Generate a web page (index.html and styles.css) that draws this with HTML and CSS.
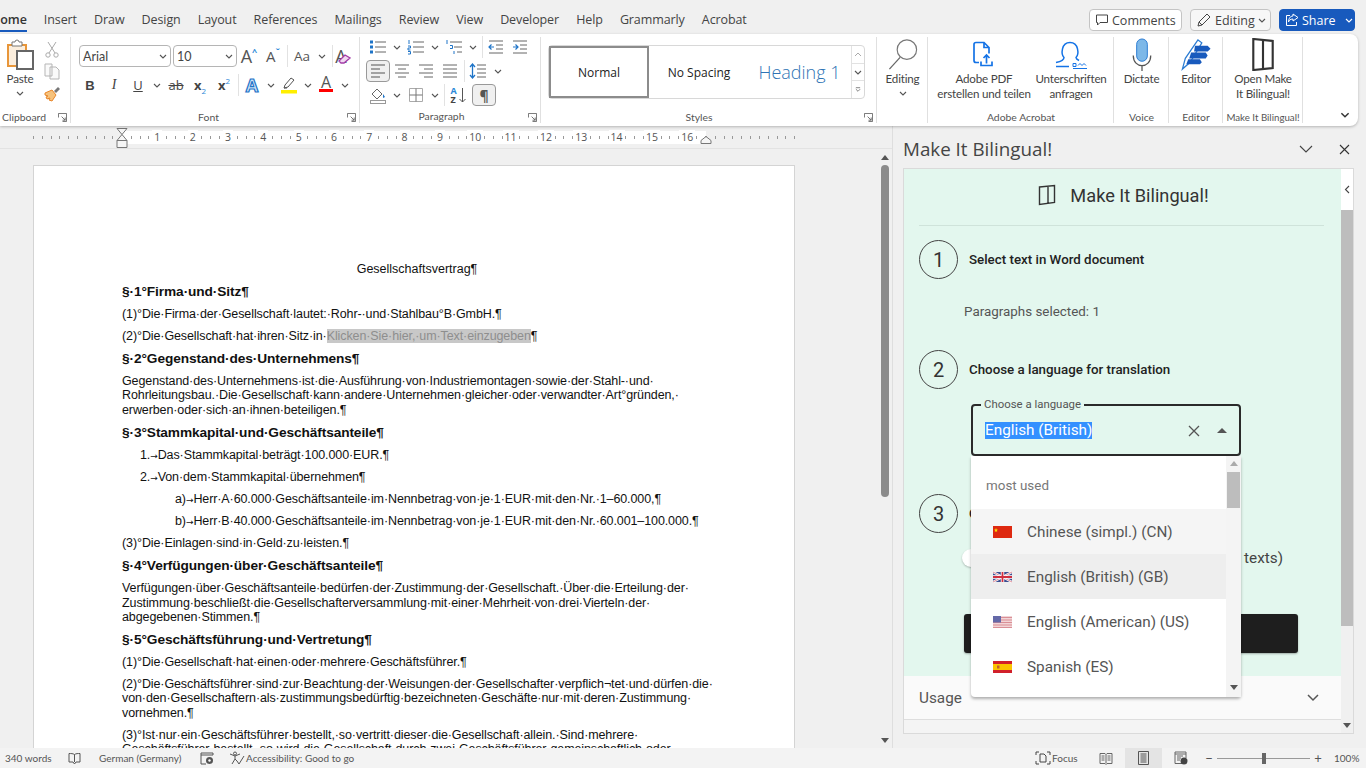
FILE: index.html
```html
<!DOCTYPE html>
<html lang="en">
<head>
    <meta charset="UTF-8">
    <title>Gesellschaftsvertrag - Word</title>
    <link rel="stylesheet" href="styles.css">
</head>
<body>
<svg class="defs" aria-hidden="true">
    <symbol id="chev" viewBox="0 0 8 5"><path d="M1 1l3 3 3-3" fill="none" stroke="#555" stroke-width="1.1"/></symbol>
    <symbol id="launch" viewBox="0 0 10 10"><path d="M.5 5V.5H9.5V9.5H5M4 4l4 4M5 8h3V5" fill="none" stroke="#666"/></symbol>
</svg>

<div class="app">
    <div class="topbar">
        <nav class="tabs">
            <span class="tab tab-on">Home</span>
            <span class="tab">Insert</span>
            <span class="tab">Draw</span>
            <span class="tab">Design</span>
            <span class="tab">Layout</span>
            <span class="tab">References</span>
            <span class="tab">Mailings</span>
            <span class="tab">Review</span>
            <span class="tab">View</span>
            <span class="tab">Developer</span>
            <span class="tab">Help</span>
            <span class="tab">Grammarly</span>
            <span class="tab">Acrobat</span>
        </nav>
        <div class="top-actions">
            <button class="tbtn tbtn-comments"><svg width="14" height="14" viewBox="0 0 14 14"><path d="M1.500 2h11v7.500H5L2.500 12V9.500h-1z" fill="none" stroke="#444"/></svg>Comments</button>
            <button class="tbtn tbtn-editing"><svg width="16" height="16" viewBox="0 0 16 16"><path d="M2 14l1-4 8-8 3 3-8 8zM3 10l3 3" fill="none" stroke="#444"/></svg>Editing<svg class="mini" viewBox="0 0 8 5"><use href="#chev"/></svg></button>
            <button class="tbtn tbtn-share"><svg width="14" height="14" viewBox="0 0 14 14"><path d="M8 1l5 3.500L8 8V6C5 6 4 7.500 3.500 9 3.500 6 5 3 8 3zM5 2.500H1.500v10h10V9" fill="none" stroke="#fff"/></svg>Share<span class="share-sep"><svg class="mini" viewBox="0 0 8 5"><path d="M1 1l3 3 3-3" fill="none" stroke="#fff" stroke-width="1.100"/></svg></span></button>
        </div>
    </div>

    <div class="ribbon">
        <section class="group g-clip">
            <div class="g-body clip-body">
                <div class="big paste">
                    <svg width="30" height="33" viewBox="0 0 30 33"><path d="M3 7h18v21H3z" fill="#fbeedd" stroke="#e8963a" stroke-width="2"/><path d="M7 7V4h3a2 2 0 0 1 4 0h3v4H7z" fill="#fff" stroke="#777"/><path d="M12 13h16v18H12z" fill="#fff" stroke="#666" stroke-width="2"/></svg>
                    <span>Paste</span>
                    <svg class="mini" viewBox="0 0 8 5"><use href="#chev"/></svg>
                </div>
                <div class="clip-tools">
                    <svg width="14" height="17" viewBox="0 0 14 17"><path d="M3 1l7 11M11 1L4 12" stroke="#aaa" fill="none"/><circle cx="3" cy="14" r="2.200" fill="none" stroke="#aaa"/><circle cx="11" cy="14" r="2.200" fill="none" stroke="#aaa"/></svg>
                    <svg width="16" height="17" viewBox="0 0 16 17"><path d="M1 1h7v12H1zM6 4h6l3 3v9H6z" fill="#fafafa" stroke="#b5b5b5"/></svg>
                    <svg width="17" height="17" viewBox="0 0 17 17"><path d="M1 8l7-3 4 5-4 6-3-1 1-2-3 1-1-2 2-1-3-1z" fill="#f6c27c" stroke="#e8862a"/><path d="M10 6l4-4 2 2-4 4z" fill="#777"/></svg>
                </div>
            </div>
            <div class="g-label">Clipboard<svg class="launch" viewBox="0 0 10 10"><use href="#launch"/></svg></div>
        </section>

        <section class="group g-font">
            <div class="g-body rows-font">
                <div class="row">
                    <div class="combo combo-font">Arial<svg class="mini" viewBox="0 0 8 5"><use href="#chev"/></svg></div>
                    <div class="combo combo-size">10<svg class="mini" viewBox="0 0 8 5"><use href="#chev"/></svg></div>
                    <span class="b glyph glyph-big">A<i class="sup-blue">^</i></span>
                    <span class="b glyph glyph-mid">A<i class="sup-blue">ˇ</i></span>
                    <i class="sep"></i>
                    <span class="b b-aa glyph">Aa</span><span class="ch"><svg class="mini" viewBox="0 0 8 5"><use href="#chev"/></svg></span>
                    <i class="sep sep-far"></i>
                    <span class="b glyph glyph-big clear-fmt">A<svg width="13" height="10" viewBox="0 0 13 10"><path d="M1 7l6-6 5 3-6 5H3z" fill="#f0d8f0" stroke="#a33ca8" stroke-width="1.300"/></svg></span>
                </div>
                <div class="row row-fmt">
                    <span class="b fmt fmt-b">B</span>
                    <span class="b fmt fmt-i">I</span>
                    <span class="b fmt fmt-u">U</span><span class="ch ch-n"><svg class="mini" viewBox="0 0 8 5"><use href="#chev"/></svg></span>
                    <span class="b fmt fmt-s">ab</span>
                    <span class="b fmt fmt-x">x<i class="blue-sub">2</i></span>
                    <span class="b fmt fmt-x">x<i class="blue-sup">2</i></span>
                    <i class="sep"></i>
                    <span class="b fx-a">A</span><span class="ch"><svg class="mini" viewBox="0 0 8 5"><use href="#chev"/></svg></span>
                    <span class="b"><svg width="18" height="18" viewBox="0 0 18 18"><path d="M4 12l1-3 6-7 3 2-6 7z" fill="#fff" stroke="#555"/><path d="M4 12l3 0" stroke="#555"/><rect x="1" y="14" width="16" height="3.500" fill="#ffef00"/></svg></span><span class="ch"><svg class="mini" viewBox="0 0 8 5"><use href="#chev"/></svg></span>
                    <span class="b fcolor">A</span><span class="ch"><svg class="mini" viewBox="0 0 8 5"><use href="#chev"/></svg></span>
                </div>
            </div>
            <div class="g-label">Font<svg class="launch" viewBox="0 0 10 10"><use href="#launch"/></svg></div>
        </section>

        <section class="group g-para">
            <div class="g-body rows-para">
                <div class="row">
                    <span class="b"><svg width="18" height="16" viewBox="0 0 18 16"><path d="M6 3h11M6 8h11M6 13h11" stroke="#666"/><path d="M1 1.500h3v3H1zM1 6.500h3v3H1zM1 11.500h3v3H1z" fill="#1e74c8"/></svg></span><span class="ch ch-w"><svg class="mini" viewBox="0 0 8 5"><use href="#chev"/></svg></span>
                    <span class="b"><svg width="18" height="16" viewBox="0 0 18 16"><path d="M6 3h11M6 8h11M6 13h11" stroke="#666"/><path d="M2 1v4M1 7h2.500v2H1v2h2.500M1 12.500h2.500V15H1" fill="none" stroke="#1e74c8"/></svg></span><span class="ch ch-w"><svg class="mini" viewBox="0 0 8 5"><use href="#chev"/></svg></span>
                    <span class="b"><svg width="18" height="16" viewBox="0 0 18 16"><path d="M5 3h12M9 8h8M12 13h5" stroke="#666"/><path d="M2 1v4M5 6.500h2.500v3H5M9 12v3" fill="none" stroke="#1e74c8"/></svg></span><span class="ch ch-w"><svg class="mini" viewBox="0 0 8 5"><use href="#chev"/></svg></span>
                    <i class="sep"></i>
                    <span class="b"><svg width="16" height="14" viewBox="0 0 16 14"><path d="M1 1h14M8 5h7M8 9h7M1 13h14" stroke="#666"/><path d="M6 7H1M3.500 4.500L1 7l2.500 2.500" fill="none" stroke="#1e74c8" stroke-width="1.200"/></svg></span>
                    <span class="b"><svg width="16" height="14" viewBox="0 0 16 14"><path d="M1 1h14M8 5h7M8 9h7M1 13h14" stroke="#666"/><path d="M1 7h5M3.500 4.500L6 7 3.500 9.500" fill="none" stroke="#1e74c8" stroke-width="1.200"/></svg></span>
                </div>
                <div class="row">
                    <span class="b b-on"><svg width="16" height="14" viewBox="0 0 16 14"><path d="M1 1h14M1 5h9M1 9h14M1 13h9" stroke="#555"/></svg></span>
                    <span class="b"><svg width="16" height="14" viewBox="0 0 16 14"><path d="M1 1h14M4 5h8M1 9h14M4 13h8" stroke="#666"/></svg></span>
                    <span class="b"><svg width="16" height="14" viewBox="0 0 16 14"><path d="M1 1h14M6 5h9M1 9h14M6 13h9" stroke="#666"/></svg></span>
                    <span class="b"><svg width="16" height="14" viewBox="0 0 16 14"><path d="M1 1h14M1 5h14M1 9h14M1 13h14" stroke="#666"/></svg></span>
                    <i class="sep"></i>
                    <span class="b"><svg width="18" height="16" viewBox="0 0 18 16"><path d="M8 2h9M8 6h9M8 10h9M8 14h9" stroke="#666"/><path d="M3.500 1v14M1 4l2.500-3L6 4M1 12l2.500 3L6 12" fill="none" stroke="#1e74c8" stroke-width="1.300"/></svg></span><span class="ch ch-s"><svg class="mini" viewBox="0 0 8 5"><use href="#chev"/></svg></span>
                </div>
                <div class="row">
                    <span class="b"><svg width="18" height="18" viewBox="0 0 18 18"><path d="M3 8l5-5 5 5-5 5z" fill="#fff" stroke="#666"/><path d="M14 8l2 3-2 1z" fill="#1e74c8"/><rect x="1.500" y="14.500" width="15" height="3" fill="#fff" stroke="#999"/></svg></span><span class="ch ch-w"><svg class="mini" viewBox="0 0 8 5"><use href="#chev"/></svg></span>
                    <span class="b"><svg width="16" height="16" viewBox="0 0 16 16"><path d="M1.500 1.500h13v13h-13z" fill="none" stroke="#aaa"/><path d="M8 1.500v13M1.500 8h13" stroke="#777"/></svg></span><span class="ch ch-w"><svg class="mini" viewBox="0 0 8 5"><use href="#chev"/></svg></span>
                    <i class="sep"></i>
                    <span class="b sort"><span class="sort-az"><i>A</i><i>Z</i></span><svg width="7" height="16" viewBox="0 0 7 16"><path d="M3.500 1v14M.5 12l3 3 3-3" fill="none" stroke="#555"/></svg></span>
                    <span class="b b-on pilcrow">¶</span>
                </div>
            </div>
            <div class="g-label">Paragraph<svg class="launch" viewBox="0 0 10 10"><use href="#launch"/></svg></div>
        </section>

        <section class="group g-styles">
            <div class="g-body">
                <div class="gallery">
                    <div class="st st-normal">Normal</div>
                    <div class="st">No Spacing</div>
                    <div class="st st-h1">Heading 1</div>
                    <div class="st-scroll">
                        <span><svg class="mini" viewBox="0 0 8 5"><path d="M1 4l3-3 3 3" fill="none" stroke="#aaa"/></svg></span>
                        <span><svg class="mini" viewBox="0 0 8 5"><use href="#chev"/></svg></span>
                        <span><svg class="mini" viewBox="0 0 8 7"><path d="M1 1h6M1 3l3 3 3-3" fill="none" stroke="#555"/></svg></span>
                    </div>
                </div>
            </div>
            <div class="g-label">Styles<svg class="launch" viewBox="0 0 10 10"><use href="#launch"/></svg></div>
        </section>

        <section class="group g-edit">
            <div class="g-body">
                <div class="big">
                    <svg width="34" height="33" viewBox="0 0 34 34"><circle cx="21" cy="12" r="10" fill="none" stroke="#777" stroke-width="1.200"/><path d="M14 20L3 32" stroke="#666" stroke-width="1.300"/></svg>
                    <span>Editing</span>
                    <svg class="mini" viewBox="0 0 8 5"><use href="#chev"/></svg>
                </div>
            </div>
            <div class="g-label"></div>
        </section>

        <section class="group g-acro">
            <div class="g-body acro-body">
                <div class="big big-acro">
                    <svg width="32" height="33" viewBox="0 0 32 32"><path d="M11 24H8a2 2 0 0 1-2-2V6a2 2 0 0 1 2-2h8l5 5v6M16 4v5h5" fill="none" stroke="#1473e6" stroke-width="1.700"/><path d="M13 23v4h11v-4M18.500 25v-8M15.500 19.500l3-3 3 3" fill="none" stroke="#1473e6" stroke-width="1.700"/></svg>
                    <span>Adobe PDF<br>erstellen und teilen</span>
                </div>
                <div class="big big-sign">
                    <svg width="36" height="33" viewBox="0 0 36 32"><path d="M3 24c5-1 8-3 8-5-3-3-3-15 6-15s9 12 6 15c0 1 1 2 3 3M3 28h13" fill="none" stroke="#1473e6" stroke-width="1.500"/><path d="M20 25h3v3h-3zM25 27l2-2 2 2 2-2 2 2M20 30h14" fill="none" stroke="#1473e6"/></svg>
                    <span>Unterschriften<br>anfragen</span>
                </div>
            </div>
            <div class="g-label">Adobe Acrobat</div>
        </section>

        <section class="group g-voice">
            <div class="g-body">
                <div class="big">
                    <svg width="30" height="33" viewBox="0 0 30 34"><rect x="9.500" y="1" width="11" height="23" rx="5.500" fill="#7db8e8" stroke="#2b7cd3"/><path d="M6 18c0 14 18 14 18 0M15 28v6" fill="none" stroke="#555" stroke-width="1.300"/></svg>
                    <span>Dictate</span>
                </div>
            </div>
            <div class="g-label">Voice</div>
        </section>

        <section class="group g-editor">
            <div class="g-body">
                <div class="big">
                    <svg width="32" height="33" viewBox="0 0 32 34"><path d="M2 32l3-11L18 2l4 3-12 20z" fill="#fff" stroke="#2b7cd3" stroke-width="1.300"/><path d="M15 8h13l3 3-3 3H14zM11 15h15l2 3-2 3H9zM8 22h12l2 3-2 2H6z" fill="#185abd"/></svg>
                    <span>Editor</span>
                </div>
            </div>
            <div class="g-label">Editor</div>
        </section>

        <section class="group g-make">
            <div class="g-body">
                <div class="big">
                    <svg width="24" height="33" viewBox="0 0 24 34"><path d="M2 1l20 2v28L2 33zM12 2v29" fill="none" stroke="#333" stroke-width="2.200"/></svg>
                    <span>Open Make<br>It Bilingual!</span>
                </div>
            </div>
            <div class="g-label g-label-tight">Make It Bilingual!</div>
        </section>

        <div class="ribbon-end"><svg width="10" height="6" viewBox="0 0 8 5"><path d="M1 1l3 3 3-3" fill="none" stroke="#333" stroke-width="1.200"/></svg></div>
    </div>

    <div class="main">
        <div class="doc-col">
            <div class="ruler">
                <div class="ruler-side"></div>
                <div class="ruler-white">
                    <span class="r-half"></span>
                    <span class="r-n"><b>1</b></span><span class="r-n"><b>2</b></span><span class="r-n"><b>3</b></span><span class="r-n"><b>4</b></span>
                    <span class="r-n"><b>5</b></span><span class="r-n"><b>6</b></span><span class="r-n"><b>7</b></span><span class="r-n"><b>8</b></span>
                    <span class="r-n"><b>9</b></span><span class="r-n"><b>10</b></span><span class="r-n"><b>11</b></span><span class="r-n"><b>12</b></span>
                    <span class="r-n"><b>13</b></span><span class="r-n"><b>14</b></span><span class="r-n"><b>15</b></span><span class="r-n"><b>16</b></span>
                    <svg class="marker marker-l" width="12" height="20" viewBox="0 0 12 20"><path d="M1 .500h10L6 6.500zM6 6.500l5 6v7H1v-7zM1 12.500h10" fill="#f6f6f6" stroke="#777"/></svg>
                    <svg class="marker marker-r" width="12" height="8" viewBox="0 0 12 8"><path d="M6 .500l5 4v3H1v-3z" fill="#f6f6f6" stroke="#777"/></svg>
                </div>
                <div class="ruler-side"></div>
            </div>
            <div class="doc-row">
                <div class="doc-scroll">
                    <div class="page">
                        <p class="title">Gesellschaftsvertrag¶</p>
                        <h2>§·1°Firma·und·Sitz¶</h2>
                        <p>(1)°Die·Firma·der·Gesellschaft·lautet:·Rohr-·und·Stahlbau°B·GmbH.¶</p>
                        <p>(2)°Die·Gesellschaft·hat·ihren·Sitz·in·<span class="field">Klicken·Sie·hier,·um·Text·einzugeben</span>¶</p>
                        <h2>§·2°Gegenstand·des·Unternehmens¶</h2>
                        <p>Gegenstand·des·Unternehmens·ist·die·Ausführung·von·Industriemontagen·sowie·der·Stahl-·und·<br>Rohrleitungsbau.·Die·Gesellschaft·kann·andere·Unternehmen·gleicher·oder·verwandter·Art°gründen,·<br>erwerben·oder·sich·an·ihnen·beteiligen.¶</p>
                        <h2>§·3°Stammkapital·und·Geschäftsanteile¶</h2>
                        <p class="li1">1.<span class="tabmark">→</span>Das·Stammkapital·beträgt·100.000·EUR.¶</p>
                        <p class="li1">2.<span class="tabmark">→</span>Von·dem·Stammkapital·übernehmen¶</p>
                        <p class="li2">a)<span class="tabmark">→</span>Herr·A·60.000·Geschäftsanteile·im·Nennbetrag·von·je·1·EUR·mit·den·Nr.·1–60.000,¶</p>
                        <p class="li2">b)<span class="tabmark">→</span>Herr·B·40.000·Geschäftsanteile·im·Nennbetrag·von·je·1·EUR·mit·den·Nr.·60.001–100.000.¶</p>
                        <p>(3)°Die·Einlagen·sind·in·Geld·zu·leisten.¶</p>
                        <h2>§·4°Verfügungen·über·Geschäftsanteile¶</h2>
                        <p>Verfügungen·über·Geschäftsanteile·bedürfen·der·Zustimmung·der·Gesellschaft.·Über·die·Erteilung·der·<br>Zustimmung·beschließt·die·Gesellschafterversammlung·mit·einer·Mehrheit·von·drei·Vierteln·der·<br>abgegebenen·Stimmen.¶</p>
                        <h2>§·5°Geschäftsführung·und·Vertretung¶</h2>
                        <p>(1)°Die·Gesellschaft·hat·einen·oder·mehrere·Geschäftsführer.¶</p>
                        <p>(2)°Die·Geschäftsführer·sind·zur·Beachtung·der·Weisungen·der·Gesellschafter·verpflich¬tet·und·dürfen·die·<br>von·den·Gesellschaftern·als·zustimmungsbedürftig·bezeichneten·Geschäfte·nur·mit·deren·Zustimmung·<br>vornehmen.¶</p>
                        <p>(3)°Ist·nur·ein·Geschäftsführer·bestellt,·so·vertritt·dieser·die·Gesellschaft·allein.·Sind·mehrere·<br>Geschäftsführer·bestellt,·so·wird·die·Gesellschaft·durch·zwei·Geschäftsführer·gemeinschaftlich·oder·</p>
                    </div>
                </div>
                <div class="vbar">
                    <i class="arrow-up"></i>
                    <div class="vthumb"></div>
                    <i class="arrow-down vbar-down"></i>
                </div>
            </div>
        </div>

        <aside class="pane">
            <div class="pane-head">
                <span class="pane-title">Make It Bilingual!</span>
                <svg class="pane-chev" width="14" height="8" viewBox="0 0 14 8"><path d="M1 1l6 6 6-6" fill="none" stroke="#444" stroke-width="1.100"/></svg>
                <svg width="11" height="11" viewBox="0 0 11 11"><path d="M1 1l9 9M10 1l-9 9" stroke="#333" stroke-width="1.100"/></svg>
            </div>
            <div class="addin">
                <div class="addin-body">
                    <div class="mint">
                        <div class="brand">
                            <svg width="18" height="22" viewBox="0 0 18 22"><path d="M1.500 3l15-1.500v17l-15 2zM10 2.500v17" fill="none" stroke="#333" stroke-width="1.400"/></svg>
                            <span>Make It Bilingual!</span>
                        </div>
                        <div class="step">
                            <span class="num">1</span>
                            <strong>Select text in Word document</strong>
                        </div>
                        <p class="selected-count">Paragraphs selected: 1</p>
                        <div class="step step-2">
                            <span class="num">2</span>
                            <strong>Choose a language for translation</strong>
                        </div>
                        <div class="field-wrap">
                            <label class="field-label">Choose a language</label>
                            <div class="select-box">
                                <span class="select-val">English (British)</span>
                                <svg class="select-x" width="12" height="12" viewBox="0 0 12 12"><path d="M1 1l10 10M11 1L1 11" stroke="#555" stroke-width="1.300"/></svg>
                                <i class="select-tri"></i>
                            </div>
                            <div class="dropdown">
                                <div class="dd-list">
                                    <div class="dd-head">most used</div>
                                    <div class="dd-item dd-hover">
                                        <svg class="flag" viewBox="0 0 19 12"><rect width="19" height="12" fill="#de2910"/><path d="M3 2l.6 1.500L5 3.700l-1.100.9.300 1.500L3 5.300l-1.200.8.300-1.500L1 3.700l1.400-.2z" fill="#ffde00"/></svg>
                                        <span>Chinese (simpl.) (CN)</span>
                                    </div>
                                    <div class="dd-item dd-active">
                                        <svg class="flag" viewBox="0 0 19 12"><rect width="19" height="10" y="1" fill="#3b4f91"/><path d="M0 1l19 10M19 1L0 11" stroke="#fff" stroke-width="2"/><path d="M0 1l19 10M19 1L0 11" stroke="#cf5b6b" stroke-width=".7"/><path d="M9.500 1v10M0 6h19" stroke="#fff" stroke-width="3.400"/><path d="M9.500 1v10M0 6h19" stroke="#cf3040" stroke-width="1.800"/></svg>
                                        <span>English (British) (GB)</span>
                                    </div>
                                    <div class="dd-item">
                                        <svg class="flag" viewBox="0 0 19 12"><rect width="19" height="12" fill="#f2d5d7"/><path d="M0 1.500h19M0 4h19M0 6.500h19M0 9h19M0 11.500h19" stroke="#d98f96" stroke-width="1.100"/><rect width="8" height="6.500" fill="#6469a8"/></svg>
                                        <span>English (American) (US)</span>
                                    </div>
                                    <div class="dd-item">
                                        <svg class="flag" viewBox="0 0 19 12"><rect width="19" height="12" fill="#d1202a"/><rect y="3" width="19" height="6" fill="#fbc400"/><rect x="4" y="4.500" width="2.500" height="3" fill="#c06030"/></svg>
                                        <span>Spanish (ES)</span>
                                    </div>
                                </div>
                                <div class="dd-bar">
                                    <i class="arrow-up dd-up"></i>
                                    <div class="dd-thumb"></div>
                                    <i class="arrow-down dd-down"></i>
                                </div>
                            </div>
                        </div>
                        <div class="step step-3">
                            <span class="num">3</span>
                            <strong>Create bilingual document</strong>
                        </div>
                        <div class="toggle-row">
                            <i class="toggle"></i>
                            <span>Use machine translation (for longer texts)</span>
                        </div>
                        <button class="run-btn" aria-label="Translate"></button>
                    </div>
                    <div class="usage">
                        <span>Usage</span>
                        <svg width="12" height="8" viewBox="0 0 12 8"><path d="M1 1l5 5 5-5" fill="none" stroke="#555" stroke-width="1.500"/></svg>
                    </div>
                </div>
                <div class="addin-bar">
                    <div class="collapse-tab"><svg width="6" height="9" viewBox="0 0 6 9"><path d="M5 1L1.500 4.500 5 8" fill="none" stroke="#444" stroke-width="1.100"/></svg></div>
                    <div class="addin-thumb"></div>
                    <i class="arrow-down addin-down"></i>
                </div>
            </div>
        </aside>
    </div>

    <footer class="status">
        <span class="st-words">340 words</span>
        <svg class="st-book" width="13" height="13" viewBox="0 0 13 13"><path d="M1 1.500c2 0 4 0 5.500 1 1.500-1 3.500-1 5.500-1V10H8l-1.500 2L5 10H1zM6.500 2.500V10" fill="none" stroke="#555"/></svg>
        <span class="st-lang">German (Germany)</span>
        <svg class="st-macro" width="14" height="13" viewBox="0 0 14 13"><path d="M1 1h12v2H1zM1 3v9h5" fill="none" stroke="#555"/><circle cx="9.500" cy="8.500" r="3.500" fill="#555"/><circle cx="9.500" cy="8.500" r="1.200" fill="#fff"/></svg>
        <svg class="st-acc" width="16" height="14" viewBox="0 0 16 14"><circle cx="6" cy="2.500" r="1.500" fill="none" stroke="#555"/><path d="M1 3l5 2 5-2M6 5v3l-3 5M6 8l2 2 2 3 5-8" fill="none" stroke="#555"/></svg>
        <span class="st-a11y">Accessibility: Good to go</span>
        <div class="st-right">
            <svg width="16" height="14" viewBox="0 0 16 14"><path d="M1 4V1h3M12 1h3v3M15 10v3h-3M4 13H1v-3" fill="none" stroke="#444"/><path d="M5 3h4l2 2v6H5z" fill="none" stroke="#444"/></svg>
            <span class="st-focus">Focus</span>
            <svg class="st-read" width="14" height="13" viewBox="0 0 14 13"><path d="M1 1.500h5l1 1 1-1h5v10H8l-1 1-1-1H1zM7 2.500v9M2.500 4h3M2.500 6h3M2.500 8h3M8.500 4h3M8.500 6h3M8.500 8h3" fill="none" stroke="#666"/></svg>
            <span class="st-print"><svg width="11" height="14" viewBox="0 0 11 14"><path d="M.5.500h10v13H.5zM2.500 3h6M2.500 5h6M2.500 7h6M2.500 9h6M2.500 11h6" fill="none" stroke="#555"/></svg></span>
            <svg class="st-web" width="14" height="14" viewBox="0 0 14 14"><path d="M9 12.500H1V1h11v6M1 3h11M3 5h6M3 7h4M3 9h3" fill="none" stroke="#666"/><circle cx="10" cy="10" r="3.500" fill="#444"/></svg>
            <span class="st-zoomctl">−</span>
            <div class="slider"><i></i></div>
            <span class="st-zoomctl st-plus">+</span>
            <span class="st-pct">100%</span>
        </div>
    </footer>
</div>
</body>
</html>
```

FILE: styles.css
```css
*{
    margin: 0;
    padding: 0;
    box-sizing: border-box;
}
html,body{
    width: 1366px;
    height: 768px;
    overflow: hidden;
}
body{
    background: #f0f0f0;
    font-family: "Open Sans", "Liberation Sans", sans-serif;
    color: #444;
}
i{
    font-style: normal;
}
.defs{
    display: none;
}
.app{
    display: flex;
    flex-direction: column;
    height: 768px;
}
.mini{
    width: 8px;
    height: 5px;
    display: block;
    flex: none;
}

/* top tabs */
.topbar{
    height: 34px;
    display: flex;
    justify-content: space-between;
    padding-right: 11px;
    flex: none;
}
.tabs{
    display: flex;
    gap: 17.100px;
    margin-left: -9px;
    font-size: 12.500px;
    letter-spacing: -.1px;
}
.tab{
    height: 32px;
    line-height: 40px;
    color: #444;
    white-space: nowrap;
}
.tab-on{
    border-bottom: 2px solid #185abd;
    color: #333;
    font-weight: 600;
}
.top-actions{
    display: flex;
    gap: 8px;
    padding-top: 9px;
}
.tbtn{
    height: 22px;
    border: 1px solid #c4c4c4;
    border-radius: 4px;
    background: #fff;
    display: flex;
    align-items: center;
    gap: 3px;
    font: 12.500px "Open Sans", sans-serif;
    color: #444;
    padding: 0 5px;
    white-space: nowrap;
}
.tbtn svg{
    flex: none;
}
.tbtn-comments{
    width: 93px;
}
.tbtn-editing{
    width: 81px;
    background: #f7f7f7;
}
.tbtn-share{
    width: 76px;
    background: #185abd;
    border-color: #185abd;
    color: #fff;
}
.share-sep{
    margin-left: 6px;
}

/* ribbon */
.ribbon{
    height: 92px;
    width: 1358px;
    background: #fff;
    border-radius: 0 8px 8px 0;
    box-shadow: 0 1px 3px rgba(0,0,0,.25);
    display: flex;
    flex: none;
    position: relative;
    z-index: 2;
    font-family: Lato, "Open Sans", sans-serif;
    font-size: 12px;
    color: #444;
}
.group{
    display: flex;
    flex-direction: column;
    position: relative;
    padding: 2px 0 0;
}
.group::after{
    content: "";
    position: absolute;
    right: 0;
    top: 3px;
    bottom: 3px;
    width: 1px;
    background: #e0e0e0;
}
.g-body{
    height: 72px;
    flex: none;
}
.g-label{
    flex: 1;
    font-size: 10.400px;
    line-height: 18px;
    text-align: center;
    color: #555;
    white-space: nowrap;
}
.g-label-tight{
    font-size: 9.700px;
}
.launch{
    position: absolute;
    right: 4px;
    bottom: 4px;
    width: 9px;
    height: 9px;
}
.g-clip{
    width: 71px;
}
.g-font{
    width: 289px;
}
.g-font .g-label{
    padding-right: 14px;
}
.g-para{
    width: 181px;
}
.g-para .g-label{
    padding-right: 18px;
}
.g-styles{
    width: 336px;
}
.g-styles .g-label{
    padding-right: 20px;
}
.g-edit{
    width: 51px;
}
.g-acro{
    width: 186px;
}
.g-voice{
    width: 55px;
}
.g-editor{
    width: 54px;
}
.g-make{
    width: 80px;
}
.g-clip .g-label{
    text-align: left;
    padding-left: 2px;
}
.ribbon-end{
    flex: 1;
    display: flex;
    align-items: flex-end;
    justify-content: flex-end;
    padding: 0 8px 8px 0;
}
.big{
    display: flex;
    flex-direction: column;
    align-items: center;
    padding-top: 2px;
    line-height: 15px;
    text-align: center;
    white-space: nowrap;
    font-size: 11.600px;
    letter-spacing: -.2px;
}
.big .mini{
    margin-top: 5px;
}
.clip-body{
    display: flex;
    padding-left: 5px;
}
.paste{
    width: 30px;
}
.clip-tools{
    display: flex;
    flex-direction: column;
    align-items: center;
    justify-content: space-between;
    width: 16px;
    height: 66px;
    margin-left: 9px;
    padding-top: 5px;
}

/* font group */
.row{
    display: flex;
    align-items: center;
    height: 24px;
}
.rows-font{
    padding: 8px 0 0 8px;
}
.row-fmt{
    margin: 5px 0 0 -1px;
}
.b{
    width: 24px;
    height: 22px;
    display: flex;
    align-items: center;
    justify-content: center;
    flex: none;
    border-radius: 4px;
    border: 1px solid transparent;
    position: relative;
    font-family: "Open Sans", sans-serif;
}
.b-on{
    background: #f0f0f0;
    border-color: #999;
}
.ch{
    width: 13px;
    height: 22px;
    display: flex;
    align-items: center;
    justify-content: center;
    flex: none;
}
.ch-n{
    width: 14px;
}
.ch-w{
    width: 14px;
}
.ch-s{
    width: 10px;
    margin-left: 3px;
}
.sep{
    display: block;
    width: 1px;
    height: 22px;
    background: #e2e2e2;
    margin: 0 1.500px;
    flex: none;
}
.sep-far{
    margin: 0 -4px 0 4px;
}
.combo{
    height: 22px;
    border: 1px solid #b5b5b5;
    border-radius: 4px;
    display: flex;
    align-items: center;
    justify-content: space-between;
    padding: 0 3px;
    font-size: 12.500px;
    margin-right: 2px;
    flex: none;
}
.combo-font{
    width: 92px;
}
.combo-size{
    width: 64px;
    margin-right: 0;
}
.glyph{
    font-size: 16px;
    color: #555;
}
.glyph-big{
    font-size: 18px;
}
.glyph-mid{
    font-size: 15px;
}
.sup-blue{
    font-size: 9px;
    color: #2b88d8;
    font-weight: 700;
    margin-top: -10px;
}
.b-aa{
    font-size: 13.500px;
    width: 26px;
}
.clear-fmt svg{
    position: absolute;
    right: 1px;
    bottom: 2px;
}
.fmt{
    font-size: 13px;
    color: #444;
}
.fmt-b{
    font-weight: 700;
    font-family: "Liberation Sans", sans-serif;
}
.fmt-i{
    font-style: italic;
    font-family: "Liberation Serif", serif;
    font-size: 14px;
}
.fmt-u{
    text-decoration: underline;
}
.fmt-s{
    text-decoration: line-through;
}
.fmt-x{
    font-weight: 700;
}
.blue-sub,.blue-sup{
    font-size: 8px;
    color: #2b88d8;
    font-weight: 400;
    position: relative;
}
.blue-sub{
    top: 5px;
}
.blue-sup{
    top: -5px;
}
.fx-a{
    font-size: 18px;
    font-weight: 700;
    color: #cfe4f7;
    -webkit-text-stroke: 1.200px #1e74c8;
}
.fcolor{
    font-size: 16px;
    color: #555;
    line-height: 15px;
    padding-bottom: 3px;
    border-bottom: 4px solid transparent;
}
.fcolor::after{
    content: "";
    position: absolute;
    left: 4px;
    right: 4px;
    bottom: 0;
    height: 3.500px;
    background: #f00;
}

/* paragraph group */
.rows-para{
    padding: 0 0 0 6px;
    margin-top: -1px;
}
.rows-para .row{
    height: 24px;
}
.sort{
    gap: 2px;
}
.sort-az{
    display: flex;
    flex-direction: column;
    font-size: 9px;
    line-height: 9px;
    font-weight: 700;
    color: #2b88d8;
}
.sort-az i:last-child{
    color: #444;
}
.pilcrow{
    margin-left: 2px;
    font-size: 14px;
    font-weight: 700;
    color: #555;
}

/* styles group */
.g-styles .g-body{
    padding: 9px 0 0 7px;
}
.gallery{
    width: 317px;
    height: 54px;
    border: 1px solid #d8d8d8;
    border-radius: 4px;
    display: flex;
    font-family: "Open Sans", sans-serif;
}
.st{
    width: 100px;
    display: flex;
    align-items: center;
    justify-content: center;
    color: #222;
    font-size: 12px;
    flex: none;
}
.st-normal{
    border: 2px solid #8c8c8c;
}
.st-h1{
    color: #2e74b5;
    font-size: 18px;
    font-weight: 300;
    width: 101px;
}
.st-scroll{
    flex: 1;
    margin-left: 1px;
    border-left: 1px solid #e2e2e2;
    display: flex;
    flex-direction: column;
}
.st-scroll span{
    flex: 1;
    display: flex;
    align-items: center;
    justify-content: center;
    border-bottom: 1px solid #e2e2e2;
}
.st-scroll span:last-child{
    border-bottom: 0;
}
.acro-body{
    display: flex;
    padding-left: 8px;
}
.big-acro{
    width: 96px;
}
.big-sign{
    width: 78px;
}
.g-edit .big,.g-voice .big,.g-editor .big,.g-make .big{
    width: 100%;
}
.g-edit .g-label{
    height: 18px;
}

/* main area */
.main{
    flex: 1;
    display: flex;
    min-height: 0;
}
.doc-col{
    width: 892px;
    flex: none;
    display: flex;
    flex-direction: column;
    min-width: 0;
}
.ruler{
    height: 23px;
    flex: none;
    padding: 5px 0 0 33px;
    display: flex;
    font-size: 10.500px;
    color: #555;
    border-bottom: 1px solid #e3e3e3;
}
.ruler-side{
    width: 89px;
    height: 13px;
    background: repeating-linear-gradient(90deg, #999 0, #999 1px, transparent 1px, transparent 8.830px) 0 center / 100% 3px no-repeat;
}
.ruler-white{
    width: 584px;
    height: 13px;
    background: #fff repeating-linear-gradient(90deg, #999 0, #999 1px, transparent 1px, transparent 8.830px) 0 center / 100% 3px no-repeat;
    display: flex;
    line-height: 13px;
    position: relative;
}
.r-half{
    width: 17.660px;
    flex: none;
}
.r-n{
    width: 35.330px;
    flex: none;
    text-align: center;
}
.r-n b{
    font-weight: 400;
    background: #fff;
    padding: 0 2px;
}
.marker{
    position: absolute;
}
.marker-l{
    left: -6px;
    top: -3px;
}
.marker-r{
    right: -6px;
    top: 5px;
}
.doc-row{
    flex: 1;
    display: flex;
    min-height: 0;
}
.doc-scroll{
    flex: 1;
    padding: 16px 0 0 33px;
    overflow: hidden;
}
.page{
    width: 762px;
    height: 640px;
    background: #fff;
    border: 1px solid #d4d4d4;
    padding: 96px 0 0 88px;
    font-family: "Liberation Sans", Arial, sans-serif;
    font-size: 12.500px;
    letter-spacing: -.1px;
    line-height: 14.300px;
    color: #111;
    white-space: nowrap;
}
.page p,.page h2{
    margin-bottom: 7.850px;
}
.page h2{
    font-size: 13.700px;
    font-weight: 700;
    line-height: 15px;
}
.title{
    text-align: center;
    width: 590px;
    letter-spacing: 0;
}
.tabmark{
    font-family: "DejaVu Sans", sans-serif;
    font-size: 9px;
    line-height: 0;
}
.li1{
    padding-left: 18px;
}
.li2{
    padding-left: 53px;
}
.field{
    background: #c8c8c8;
    color: #8e8e8e;
}
.vbar{
    width: 15px;
    flex: none;
    display: flex;
    flex-direction: column;
    align-items: center;
    padding: 6px 0 5px;
}
.vthumb{
    width: 8px;
    height: 332px;
    margin-top: 5px;
    background: #8b8b8b;
    border-radius: 4px;
}
.vbar-down{
    margin-top: auto;
}
.arrow-up,.arrow-down{
    display: block;
    width: 0;
    height: 0;
    border-left: 4.500px solid transparent;
    border-right: 4.500px solid transparent;
    flex: none;
}
.arrow-up{
    border-bottom: 5px solid #555;
}
.arrow-down{
    border-top: 5px solid #555;
}

/* task pane */
.pane{
    flex: 1;
    border-left: 1px solid #dedede;
    padding: 4px 12px 0 10px;
    display: flex;
    flex-direction: column;
    font-family: Roboto, "Liberation Sans", sans-serif;
}
.pane-head{
    height: 38px;
    display: flex;
    align-items: center;
    flex: none;
    padding-right: 4px;
}
.pane-title{
    font-family: "Open Sans", sans-serif;
    font-size: 18.800px;
    color: #444;
    flex: 1;
}
.pane-chev{
    margin-right: 26px;
}
.addin{
    height: 566px;
    border: 1px solid #dadada;
    display: flex;
    flex: none;
    width: 451px;
}
.addin-body{
    width: 437px;
    flex: none;
    background: #f4f4f4;
}
.addin-bar{
    flex: 1;
    display: flex;
    flex-direction: column;
    align-items: center;
    background: #f0f0f0;
}
.collapse-tab{
    width: 100%;
    height: 41px;
    background: #fff;
    display: flex;
    align-items: center;
    justify-content: center;
}
.addin-thumb{
    width: 12px;
    height: 416px;
    background: #bdbdbd;
}
.addin-down{
    margin-top: auto;
    margin-bottom: 5px;
}
.mint{
    height: 507px;
    background: #e3f7ee;
    padding: 0 15px;
    color: #222;
}
.brand{
    height: 57px;
    display: flex;
    align-items: center;
    justify-content: center;
    gap: 14px;
    border-bottom: 1px solid #cfe3da;
    font-size: 18.200px;
    color: #333;
    width: 405px;
    padding: 0 0 4px 4px;
}
.step{
    display: flex;
    align-items: center;
    gap: 11px;
    margin-top: 14px;
}
.step strong{
    font-weight: 500;
    font-size: 13.330px;
    color: #222;
}
.num{
    width: 39px;
    height: 39px;
    border: 1px solid #444;
    border-radius: 50%;
    display: flex;
    align-items: center;
    justify-content: center;
    font-size: 20px;
    color: #333;
    flex: none;
}
.selected-count{
    font-size: 13.400px;
    color: #555;
    line-height: 20px;
    margin: 23px 0 0 45px;
}
.step-2{
    margin-top: 28px;
}
.step-3{
    margin-top: 38px;
}
.field-wrap{
    width: 270px;
    margin: 15px 0 0 52px;
    position: relative;
    z-index: 3;
}
.field-label{
    position: absolute;
    left: 10px;
    top: -7px;
    background: #e3f7ee;
    padding: 0 3px;
    font-size: 11.400px;
    line-height: 14px;
    color: #555;
}
.select-box{
    height: 52px;
    border: 2px solid #2a2a2a;
    border-radius: 4px;
    display: flex;
    align-items: center;
    padding: 1px 12px 0;
    font-size: 15.300px;
}
.select-val{
    background: #3390ff;
    color: #fff;
    line-height: 17px;
    margin-right: auto;
}
.select-x{
    margin-right: 17px;
}
.select-tri{
    width: 0;
    height: 0;
    border-left: 5px solid transparent;
    border-right: 5px solid transparent;
    border-bottom: 5px solid #555;
}
.dropdown{
    position: absolute;
    left: 0;
    top: 52px;
    width: 270px;
    height: 241px;
    background: #fff;
    border-radius: 0 0 4px 4px;
    box-shadow: 0 2px 3px rgba(0,0,0,.3);
    display: flex;
}
.dd-list{
    width: 255px;
    flex: none;
}
.dd-head{
    height: 53px;
    line-height: 60px;
    padding-left: 15px;
    font-size: 13.400px;
    color: #777;
}
.dd-item{
    height: 45px;
    display: flex;
    align-items: center;
    padding-left: 22px;
    gap: 15px;
    font-size: 15.300px;
    color: #555;
}
.dd-hover{
    background: #f5f5f5;
}
.dd-active{
    background: #eee;
}
.flag{
    width: 19px;
    height: 12px;
    flex: none;
}
.dd-bar{
    flex: 1;
    background: #f4f4f4;
    display: flex;
    flex-direction: column;
    align-items: center;
    padding-top: 5px;
}
.dd-up{
    border-bottom-color: #aaa;
    border-left-width: 4px;
    border-right-width: 4px;
}
.dd-thumb{
    width: 13px;
    height: 36px;
    margin-top: 6px;
    background: #bdbdbd;
}
.dd-down{
    margin-top: auto;
    margin-bottom: 7px;
}
.toggle-row{
    display: flex;
    align-items: center;
    justify-content: flex-end;
    height: 20px;
    width: 364px;
    margin-top: 15px;
    font-size: 15.300px;
    color: #444;
    position: relative;
}
.toggle{
    position: absolute;
    left: 43px;
    top: 1px;
    width: 18px;
    height: 18px;
    border-radius: 50%;
    background: #fff;
    box-shadow: 0 1px 2px rgba(0,0,0,.25);
}
.run-btn{
    display: block;
    width: 334px;
    height: 39px;
    margin: 46px 0 0 45px;
    background: #1e1e1e;
    border: 0;
    border-radius: 3px;
    box-shadow: 0 1px 2px rgba(0,0,0,.3);
}
.usage{
    height: 44px;
    background: #fafafa;
    border-bottom: 1px solid #dedede;
    display: flex;
    align-items: center;
    justify-content: space-between;
    padding: 0 22px 0 15px;
    font-size: 15.300px;
    color: #555;
}

/* status bar */
.status{
    height: 20px;
    flex: none;
    background: #f3f3f3;
    display: flex;
    align-items: center;
    font-family: Lato, "Open Sans", sans-serif;
    font-size: 10px;
    color: #555;
    padding-left: 5px;
    white-space: nowrap;
}
.st-words{
    width: 63px;
}
.st-book{
    flex: none;
}
.st-lang{
    width: 84px;
    margin-left: 18px;
}
.st-macro{
    margin-left: 17px;
}
.st-acc{
    margin-left: 15px;
}
.st-a11y{
    margin-left: 1px;
}
.st-right{
    margin-left: auto;
    display: flex;
    align-items: center;
    height: 20px;
    padding-right: 8px;
}
.st-focus{
    margin: 0 22px 0 1px;
    width: 25px;
}
.st-read{
    margin-right: 12px;
}
.st-print{
    width: 37px;
    height: 20px;
    background: #e4e4e4;
    display: flex;
    align-items: center;
    justify-content: center;
    margin-right: 12px;
}
.st-web{
    margin-right: 17px;
}
.st-zoomctl{
    font-size: 13px;
    width: 8px;
    text-align: center;
}
.slider{
    width: 93px;
    height: 1px;
    background: #999;
    margin: 0 4px;
    position: relative;
}
.slider i{
    position: absolute;
    left: 45px;
    top: -5px;
    width: 4px;
    height: 11px;
    background: #666;
}
.st-plus{
    margin-right: 12px;
}
.st-pct{
    width: 24px;
}
```
